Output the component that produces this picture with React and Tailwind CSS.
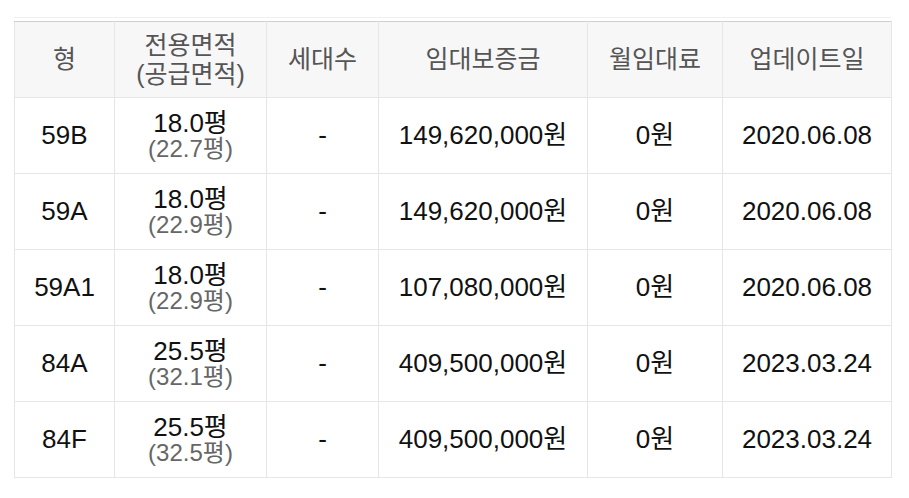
import React from "react";

const rows = [
  ["59B", "18.0평", "(22.7평)", "-", "149,620,000원", "0원", "2020.06.08"],
  ["59A", "18.0평", "(22.9평)", "-", "149,620,000원", "0원", "2020.06.08"],
  ["59A1", "18.0평", "(22.9평)", "-", "107,080,000원", "0원", "2020.06.08"],
  ["84A", "25.5평", "(32.1평)", "-", "409,500,000원", "0원", "2023.03.24"],
  ["84F", "25.5평", "(32.5평)", "-", "409,500,000원", "0원", "2023.03.24"],
];

const widths = ["w-[100px]", "w-[152px]", "w-[112px]", "w-[209px]", "w-[135px]", "w-[169px]"];
const headers = ["형", null, "세대수", "임대보증금", "월임대료", "업데이트일"];
const th = "font-normal border-t border-[#cfcfcf] border-x border-b border-x-[#e6e6e6] border-b-[#e6e6e6]";

export default function App() {
  return (
    <div
      className="w-[909px] h-[498px] bg-white pt-[17px] pl-[14px]"
      style={{ fontFamily: '"Liberation Sans", Arial, "Noto Sans CJK KR", sans-serif' }}
    >
      <div className="w-[877px] border-t border-[#f0f0f0] pt-[3px]">
        <table className="w-[877px] border-collapse table-fixed text-center">
          <colgroup>
            {widths.map((w, i) => (
              <col key={i} className={w} />
            ))}
          </colgroup>
          <thead>
            <tr className="h-[76px] bg-[#f7f7f7] text-[#555] text-[25px] leading-[29px]">
              {headers.map((h, i) => (
                <th key={i} className={th}>
                  {h === null ? (
                    <>
                      전용면적
                      <br />
                      (공급면적)
                    </>
                  ) : (
                    h
                  )}
                </th>
              ))}
            </tr>
          </thead>
          <tbody>
            {rows.map((r, i) => (
              <tr key={i} className="h-[76px] text-[26px] text-[#111]">
                <td className="border border-[#e6e6e6]">{r[0]}</td>
                <td className="border border-[#e6e6e6] leading-[26px]">
                  <div>{r[1]}</div>
                  <div className="text-[#666] text-[24px]">{r[2]}</div>
                </td>
                <td className="border border-[#e6e6e6]">{r[3]}</td>
                <td className="border border-[#e6e6e6]">{r[4]}</td>
                <td className="border border-[#e6e6e6]">{r[5]}</td>
                <td className="border border-[#e6e6e6]">{r[6]}</td>
              </tr>
            ))}
          </tbody>
        </table>
      </div>
    </div>
  );
}
